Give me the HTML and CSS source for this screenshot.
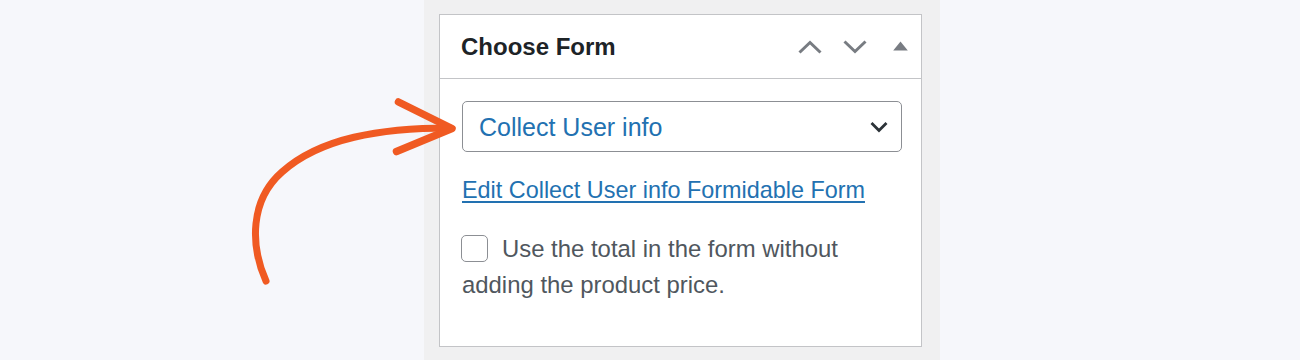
FILE: index.html
```html
<!DOCTYPE html>
<html lang="en">
<head>
<meta charset="utf-8">
<title>Choose Form</title>
<link rel="stylesheet" href="styles.css">
</head>
<body>
<div class="page">
  <div class="column">
    <div class="postbox">
      <div class="postbox-header">
        <h2 class="postbox-title">Choose Form</h2>
        <div class="handle-actions">
          <svg class="icon-chevron" width="24" height="14" viewBox="0 0 24 14"><path d="M1.5 12.5 L12 2.5 L22.5 12.5" fill="none" stroke="#787c82" stroke-width="3"/></svg>
          <svg class="icon-chevron" width="24" height="14" viewBox="0 0 24 14"><path d="M1.5 1.5 L12 11.5 L22.5 1.5" fill="none" stroke="#787c82" stroke-width="3"/></svg>
          <svg class="icon-toggle" width="15" height="10" viewBox="0 0 15 10"><path d="M7.5 0.5 L14.8 9.5 L0.2 9.5 Z" fill="#787c82"/></svg>
        </div>
      </div>
      <div class="inside">
        <div class="select">
          <span class="select-value">Collect User info</span>
          <svg class="select-arrow" width="18" height="12" viewBox="0 0 18 12"><path d="M1.5 2 L9 9.5 L16.5 2" fill="none" stroke="#2c3338" stroke-width="2.8"/></svg>
        </div>
        <p class="edit-line"><a class="edit-link" href="#">Edit Collect User info Formidable Form</a></p>
        <p class="check-line"><span class="checkbox"></span>Use the total in the form without adding the product price.</p>
      </div>
    </div>
  </div>
  <svg class="arrow" width="1300" height="360" viewBox="0 0 1300 360">
    <path d="M266 281 C250 245 250 200 282 172 C320 138 380 128 450 128" fill="none" stroke="#f05a22" stroke-width="7" stroke-linecap="round"/>
    <path d="M398.5 102 L452 128.5 L396.5 151.5" fill="none" stroke="#f05a22" stroke-width="7.5" stroke-linecap="round" stroke-linejoin="round"/>
  </svg>
</div>
</body>
</html>
```

FILE: styles.css
```css
* { box-sizing: border-box; }

html, body {
  margin: 0;
  padding: 0;
}

body {
  background: #f6f7fb;
  font-family: "Liberation Sans", Arial, sans-serif;
}

.page {
  position: relative;
  width: 1300px;
  height: 360px;
  display: flex;
}

.column {
  margin-left: 424px;
  width: 516px;
  height: 360px;
  background: #f0f0f1;
  padding: 14px 18px 0 15px;
}

.postbox {
  background: #ffffff;
  border: 1px solid #c3c4c7;
  width: 483px;
}

.postbox-header {
  height: 64px;
  border-bottom: 1px solid #c3c4c7;
  display: flex;
  align-items: center;
  justify-content: space-between;
  padding: 0 13px 0 21px;
}

.postbox-title {
  margin: 0;
  font-size: 24px;
  font-weight: bold;
  color: #1d2327;
  line-height: 1;
  padding-top: 1px;
}

.handle-actions {
  display: flex;
  align-items: center;
  padding-top: 1px;
}

.icon-chevron {
  display: block;
  margin-right: 21px;
}

.icon-chevron + .icon-chevron {
  margin-right: 26px;
}

.icon-toggle {
  display: block;
  margin-top: -3px;
}

.inside {
  padding: 22px 19px 43px 22px;
}

.select {
  height: 51px;
  border: 1px solid #8c8f94;
  border-radius: 5px;
  display: flex;
  align-items: center;
  justify-content: space-between;
  padding: 0 13px 0 16px;
}

.select-value {
  font-size: 25px;
  color: #2271b1;
  line-height: 1;
  padding-top: 1px;
}

.select-arrow {
  display: block;
}

.edit-line {
  margin: 20px 0 0 0;
  font-size: 23.4px;
  line-height: 36px;
}

.edit-link {
  color: #2271b1;
  text-decoration: underline;
  text-decoration-thickness: 1.5px;
  text-underline-offset: 3px;
}

.check-line {
  margin: 23px 0 0 0;
  font-size: 23.9px;
  line-height: 36px;
  color: #50575e;
  width: 400px;
}

.checkbox {
  display: inline-block;
  width: 27px;
  height: 27px;
  border: 1.5px solid #8c8f94;
  border-radius: 5px;
  background: #ffffff;
  vertical-align: -4.5px;
  margin-right: 14px;
  margin-left: -1px;
}

.arrow {
  position: absolute;
  left: 0;
  top: 0;
  pointer-events: none;
}
```
